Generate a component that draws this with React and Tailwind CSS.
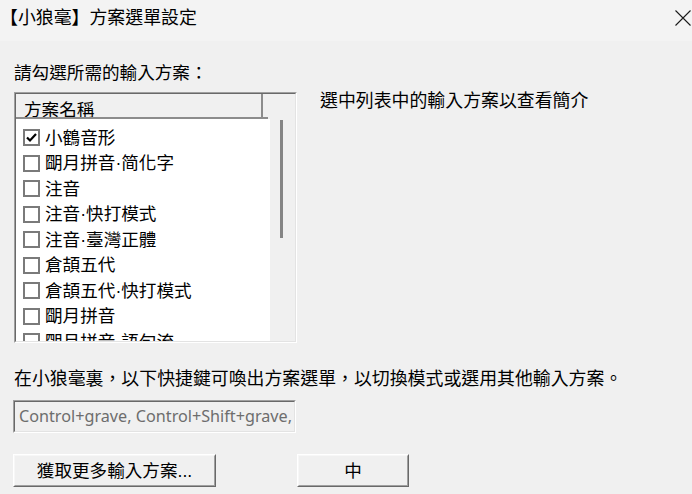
import React from "react";

const schemas = [
  { name: "小鶴音形", checked: true },
  { name: "朙月拼音·简化字" },
  { name: "注音" },
  { name: "注音·快打模式" },
  { name: "注音·臺灣正體" },
  { name: "倉頡五代" },
  { name: "倉頡五代·快打模式" },
  { name: "朙月拼音" },
  { name: "朙月拼音·語句流" },
];

const Checkbox = ({ checked }) => (
  <div className="w-[17px] h-[17px] border-2 border-[#7a7a7a] bg-white flex items-center justify-center shrink-0">
    {checked && (
      <svg width="11" height="11" viewBox="0 0 11 11">
        <path d="M1 5.5 L4 8.5 L10 2" fill="none" stroke="#000" strokeWidth="2.2" />
      </svg>
    )}
  </div>
);

const Raised = ({ className, children }) => (
  <div className={`border border-t-white border-l-white border-b-[#696969] border-r-[#696969] ${className}`}>
    <div className="w-full h-full border border-t-[#f7f7f7] border-l-[#f7f7f7] border-b-[#a0a0a0] border-r-[#a0a0a0] bg-[#f0f0f0] flex items-center justify-center">
      {children}
    </div>
  </div>
);

const App = () => {
  return (
    <div
      className="w-[692px] h-[494px] bg-[#f0f0f0] text-black overflow-hidden"
      style={{ fontFamily: '"Liberation Sans", "Noto Sans CJK TC", sans-serif' }}
    >
      {/* title bar */}
      <div className="h-[41px] bg-[#f3f3f3] flex items-start justify-between">
        <div className="pt-[7px] leading-[22px] text-[17.9px]">【小狼毫】方案選單設定</div>
        <div className="pt-[10px] pr-[1px]">
          <svg width="16" height="16" viewBox="0 0 16 16">
            <path d="M0.5 0.5 L15.5 15.5 M15.5 0.5 L0.5 15.5" stroke="#1a1a1a" strokeWidth="1.1" fill="none" />
          </svg>
        </div>
      </div>

      <div className="px-[13px]">
        <div className="mt-[21px] pl-[1px] leading-[22px] text-[17.6px]">請勾選所需的輸入方案：</div>

        <div className="mt-[8px] flex items-start">
          {/* list box */}
          <div className="ml-[1px] w-[283px] h-[251px] border border-t-[#a0a0a0] border-l-[#a0a0a0] border-b-white border-r-white">
            <div className="w-full h-full border border-t-[#696969] border-l-[#696969] border-b-[#e3e3e3] border-r-[#e3e3e3] flex flex-col">
              <div className="h-[25px] flex shrink-0 bg-[#f0f0f0]">
                <div className="w-[247px] h-full border-r-2 border-b-2 border-[#8c8c8c] bg-[#f0f0f0] overflow-hidden pl-[8px] pt-[5px] leading-[22px] text-[17.6px]">
                  方案名稱
                </div>
                <div className="w-[5px] h-full border-b-2 border-[#8c8c8c]" />
              </div>
              <div className="flex flex-1 min-h-0">
                <div className="w-[254px] h-full bg-white overflow-hidden pt-[6px]">
                  {schemas.map((s) => (
                    <div key={s.name} className="h-[25.5px] flex items-center pl-[7px] gap-[5px]">
                      <Checkbox checked={s.checked} />
                      <span className="text-[17.6px] leading-[22px] whitespace-nowrap">{s.name}</span>
                    </div>
                  ))}
                </div>
                <div className="flex-1 h-full bg-[#f0f0f0] pl-[10px] pt-[1px]">
                  <div className="w-[3px] h-[118px] bg-[#858585]" />
                </div>
              </div>
            </div>
          </div>

          <div className="ml-[23px] -mt-[2px] leading-[22px] text-[17.9px]">選中列表中的輸入方案以查看簡介</div>
        </div>

        <div className="mt-[25px] pl-[1px] leading-[22px] text-[17.9px] whitespace-nowrap">
          在小狼毫裏，以下快捷鍵可喚出方案選單，以切換模式或選用其他輸入方案。
        </div>

        {/* hotkeys field */}
        <div className="mt-[10px] w-[283px] h-[33px] border border-t-[#a0a0a0] border-l-[#a0a0a0] border-b-white border-r-white">
          <div className="w-full h-full border border-t-[#696969] border-l-[#696969] border-b-[#e3e3e3] border-r-[#e3e3e3] bg-[#f0f0f0] flex items-center pl-[4px] overflow-hidden">
            <span
              className="text-[16.2px] text-[#6d6d6d] whitespace-nowrap"
              style={{ fontFamily: '"Noto Sans", sans-serif' }}
            >
              Control+grave, Control+Shift+grave,
            </span>
          </div>
        </div>

        <div className="mt-[21px] flex gap-[81px]">
          <Raised className="w-[203px] h-[33px]">
            <span className="text-[17.6px] leading-[22px]">獲取更多輸入方案...</span>
          </Raised>
          <Raised className="w-[112px] h-[33px]">
            <span className="text-[17.6px] leading-[22px]">中</span>
          </Raised>
        </div>
      </div>
    </div>
  );
};

export default App;
